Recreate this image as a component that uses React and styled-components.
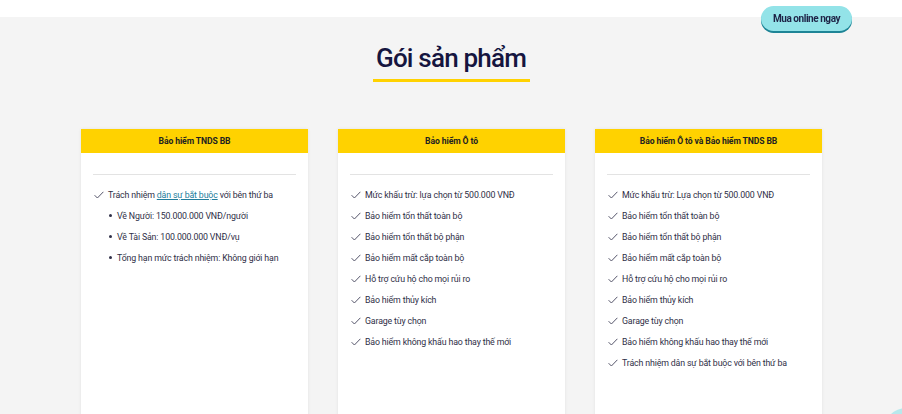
import React from "react";
import styled, { createGlobalStyle } from "styled-components";

const GlobalStyle = createGlobalStyle`
  html, body {
    margin: 0;
    padding: 0;
    overflow: hidden;
    background: #f4f4f4;
    font-family: Roboto, "Liberation Sans", sans-serif;
  }
`;

const packages = [
  {
    title: "Bảo hiểm TNDS BB",
    items: [
      {
        text: (
          <>
            Trách nhiệm <a href="#">dân sự bắt buộc</a> với bên thứ ba
          </>
        ),
        sub: [
          "Về Người: 150.000.000 VNĐ/người",
          "Về Tài Sản: 100.000.000 VNĐ/vụ",
          "Tổng hạn mức trách nhiệm: Không giới hạn",
        ],
      },
    ],
  },
  {
    title: "Bảo hiểm Ô tô",
    items: [
      { text: "Mức khấu trừ: lựa chọn từ 500.000 VNĐ" },
      { text: "Bảo hiểm tổn thất toàn bộ" },
      { text: "Bảo hiểm tổn thất bộ phận" },
      { text: "Bảo hiểm mất cắp toàn bộ" },
      { text: "Hỗ trợ cứu hộ cho mọi rủi ro" },
      { text: "Bảo hiểm thủy kích" },
      { text: "Garage tùy chọn" },
      { text: "Bảo hiểm không khấu hao thay thế mới" },
    ],
  },
  {
    title: "Bảo hiểm Ô tô và Bảo hiểm TNDS BB",
    items: [
      { text: "Mức khấu trừ: Lựa chọn từ 500.000 VNĐ" },
      { text: "Bảo hiểm tổn thất toàn bộ" },
      { text: "Bảo hiểm tổn thất bộ phận" },
      { text: "Bảo hiểm mất cắp toàn bộ" },
      { text: "Hỗ trợ cứu hộ cho mọi rủi ro" },
      { text: "Bảo hiểm thủy kích" },
      { text: "Garage tùy chọn" },
      { text: "Bảo hiểm không khấu hao thay thế mới" },
      { text: "Trách nhiệm dân sự bắt buộc với bên thứ ba" },
    ],
  },
];

const Check = () => (
  <svg width="10" height="8" viewBox="0 0 10 8" fill="none">
    <path d="M0.6 4.2 L3.4 7 L9.4 0.8" stroke="#55556a" strokeWidth="1" />
  </svg>
);

export default function App() {
  return (
    <>
      <GlobalStyle />
      <TopStrip />
      <BuyButton>Mua online ngay</BuyButton>
      <Section>
        <Title>Gói sản phẩm</Title>
        <Underline />
        <Cards>
          {packages.map((p) => (
            <Card key={p.title}>
              <CardHeader>{p.title}</CardHeader>
              <CardBody>
                <Divider />
                <List>
                  {p.items.map((it, i) => (
                    <li key={i}>
                      <Item>
                        <Check />
                        <span>{it.text}</span>
                      </Item>
                      {it.sub && (
                        <SubList>
                          {it.sub.map((s) => (
                            <li key={s}>{s}</li>
                          ))}
                        </SubList>
                      )}
                    </li>
                  ))}
                </List>
              </CardBody>
            </Card>
          ))}
        </Cards>
      </Section>
      <ChatBubble />
    </>
  );
}

const TopStrip = styled.div`
  height: 17px;
  background: #fff;
`;

const BuyButton = styled.button`
  position: fixed;
  top: 6px;
  left: 761px;
  width: 91px;
  height: 25px;
  border: none;
  border-radius: 14px;
  background: #93e3e8;
  box-shadow: 0 2px 0 #1d8496;
  color: #1e2447;
  font-family: Roboto, "Liberation Sans", sans-serif;
  font-weight: 700;
  font-size: 10px;
  letter-spacing: -0.45px;
  padding: 0;
  cursor: pointer;
`;

const Section = styled.section`
  padding-top: 24px;
`;

const Title = styled.h2`
  margin: 0;
  text-align: center;
  font-family: Roboto, "Liberation Sans", sans-serif;
  font-weight: 500;
  font-size: 26px;
  line-height: 34px;
  letter-spacing: -0.8px;
  color: #15153f;
`;

const Underline = styled.div`
  width: 157px;
  height: 3px;
  margin: 4px auto 0;
  background: #ffd200;
`;

const Cards = styled.div`
  display: flex;
  justify-content: center;
  gap: 30px;
  margin-top: 47px;
  padding-left: 1px;
`;

const Card = styled.div`
  width: 227px;
  height: 320px;
  background: #fff;
  box-shadow: 0 0 3px rgba(0, 0, 0, 0.08);
`;

const CardHeader = styled.div`
  height: 24px;
  background: #ffd200;
  display: flex;
  align-items: center;
  justify-content: center;
  font-size: 8.6px;
  letter-spacing: -0.1px;
  font-weight: 700;
  color: #222;
`;

const CardBody = styled.div`
  padding: 21px 12px 0;
`;

const Divider = styled.div`
  height: 1px;
  background: #e3e3e3;
`;

const List = styled.ul`
  list-style: none;
  margin: 9px 0 0;
  padding: 0 0 0 1px;
`;

const Item = styled.div`
  display: flex;
  align-items: center;
  gap: 4px;
  height: 21px;
  font-size: 8.8px;
  letter-spacing: -0.15px;
  color: #2f2f47;

  a {
    color: #237d9c;
    text-decoration: underline;
  }
`;

const SubList = styled.ul`
  margin: 0;
  padding-left: 15px;
  list-style: none;

  li {
    display: flex;
    align-items: center;
    gap: 5px;
    height: 21px;
    font-size: 8.8px;
    letter-spacing: -0.15px;
    color: #2f2f47;
  }

  li::before {
    content: "";
    width: 3px;
    height: 3px;
    border-radius: 50%;
    background: #2f2f47;
  }
`;

const ChatBubble = styled.div`
  position: fixed;
  left: 884px;
  top: 408px;
  width: 44px;
  height: 44px;
  border-radius: 50%;
  background: #b8e8ec;
`;
